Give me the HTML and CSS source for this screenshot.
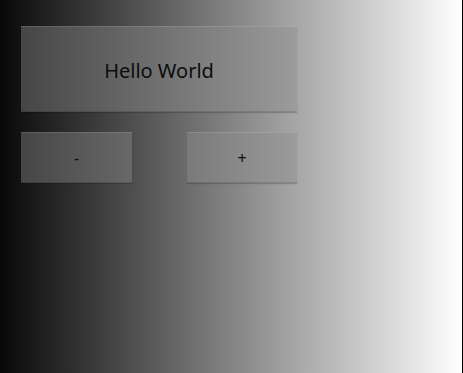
FILE: index.html
```html
<!DOCTYPE html>
<html>
<head>
<meta charset="utf-8">
<link rel="stylesheet" href="styles.css">
</head>
<body>
<div class="screen">
  <div class="content">
    <div class="panel hello">Hello World</div>
    <div class="row">
      <div class="panel btn">-</div>
      <div class="panel btn">+</div>
    </div>
  </div>
</div>
</body>
</html>
```
FILE: styles.css
```css
html, body {
  margin: 0;
  padding: 0;
  width: 463px;
  height: 373px;
  overflow: hidden;
  background: #000;
}
.screen {
  width: 462px;
  height: 373px;
  background: linear-gradient(to right, #080808 0%, #ffffff 100%);
  font-family: "Noto Sans", Roboto, sans-serif;
  color: #0c0c0c;
}
.content {
  padding: 26px 0 0 21px;
  width: 276px;
  display: flex;
  flex-direction: column;
  gap: 20px;
}
.panel {
  background: rgba(141, 141, 141, 0.42);
  box-shadow: inset 0 1px 0 rgba(255, 255, 255, 0.12), inset 0 -1px 0 rgba(0, 0, 0, 0.12), 0 1px 1px rgba(0, 0, 0, 0.18);
  display: flex;
  align-items: center;
  justify-content: center;
}
.hello {
  height: 86px;
  font-size: 20px;
  padding-top: 2px;
  box-sizing: border-box;
}
.row {
  display: flex;
  justify-content: space-between;
}
.btn {
  width: 111px;
  height: 51px;
  font-size: 16px;
  padding-top: 1px;
  box-sizing: border-box;
}
.btn + .btn {
  width: 110px;
}
```
